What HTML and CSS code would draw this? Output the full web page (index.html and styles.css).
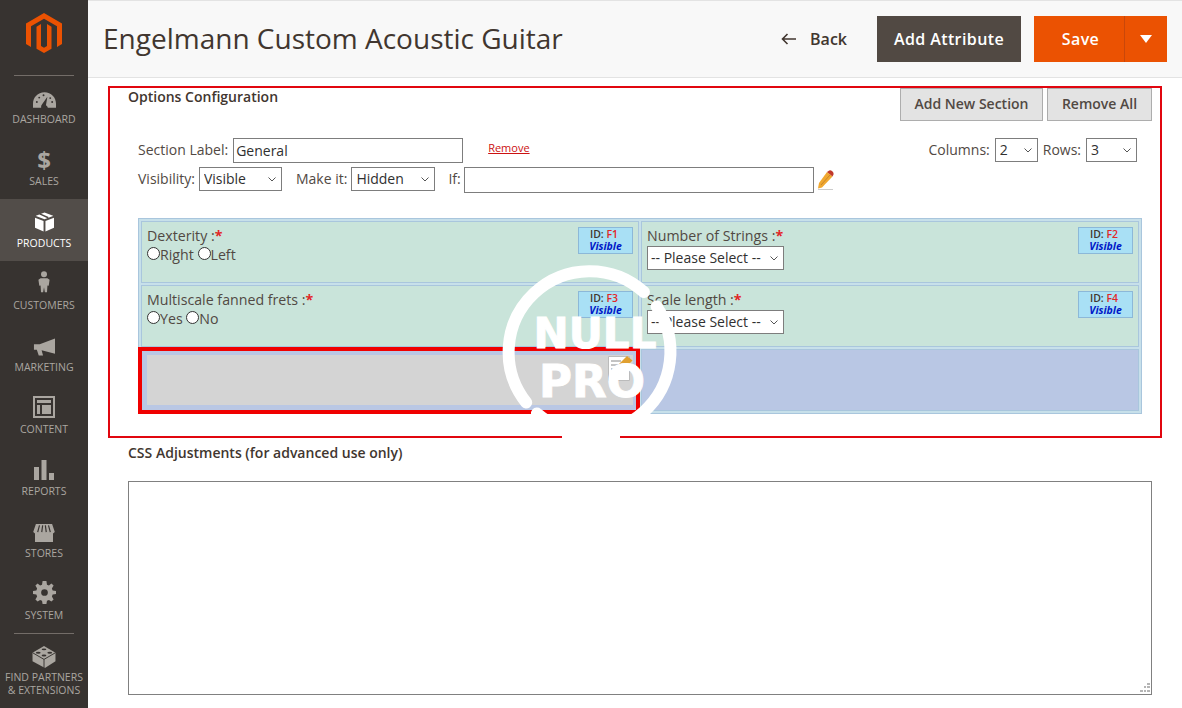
FILE: index.html
```html
<!DOCTYPE html>
<html lang="en">
<head>
<meta charset="utf-8">
<title>Engelmann Custom Acoustic Guitar</title>
<link rel="stylesheet" href="styles.css">
</head>
<body>
<div class="app">
  <nav class="side">
    <div class="logo">
      <svg width="36" height="40" viewBox="0 0 36 40"><path fill="#eb5202" d="M18 0L36 10.400V31l-5 3V13.300L18 5.800 5 13.300V34l-5-3V10.400z"/><path fill="#eb5202" d="M18 40l-7.500-4.300V13.700l4.500-2.600V33l3 1.700 3-1.700V11.100l4.500 2.600v22z"/></svg>
    </div>
    <div class="rule rule-t"></div>
    <a class="item">
      <svg class="ic" width="23" height="16" viewBox="0 0 24 16"><path fill="#aaa6a0" d="M12 0C5 0 0 5.500 0 12v4h8.500a4 4 0 0 1 1-3.500L15 4.500l-1.500 9a4 4 0 0 1 2 2.500H24v-4C24 5.500 19 0 12 0z"/><g fill="#373330"><circle cx="4" cy="10" r="1"/><circle cx="6.500" cy="5.500" r="1"/><circle cx="11" cy="3" r="1"/><circle cx="20" cy="10" r="1"/><circle cx="18" cy="6" r="1"/></g></svg>
      <span>DASHBOARD</span>
    </a>
    <a class="item">
      <span class="dollar">$</span>
      <span>SALES</span>
    </a>
    <a class="item on">
      <svg class="ic" width="19" height="20" viewBox="0 0 20 20"><path fill="#fff" d="M10 0l9 3.500v.1L10 7 1 3.600v-.1z M0 5.500l9 3.500v11L0 16z M20 5.500V16l-9 4V9z"/><path stroke="#4e4844" stroke-width="1.500" d="M5 1.500l9 4"/></svg>
      <span>PRODUCTS</span>
    </a>
    <a class="item">
      <svg class="ic" width="12" height="24" viewBox="0 0 14 25"><circle cx="7" cy="3.500" r="3.500" fill="#aaa6a0"/><path fill="#aaa6a0" d="M3 8h8l2.500 2-1 7-1.500-.5-.5 8H8l-1-6-1 6H3.500l-.5-8-1.500.5-1-7z"/></svg>
      <span>CUSTOMERS</span>
    </a>
    <a class="item">
      <svg class="ic" width="22" height="18" viewBox="0 0 23 18"><path fill="#aaa6a0" d="M23 0v16L9 12.500l1.500 5.500H6l-2-6H1V6h6z"/></svg>
      <span>MARKETING</span>
    </a>
    <a class="item">
      <svg class="ic" width="22" height="22" viewBox="0 0 22 22"><path fill="#aaa6a0" fill-rule="evenodd" d="M0 0h22v22H0zM2 2v18h18V2zM4 4h14v3H4zM4 9h3v9H4zM9 9h9v9H9z"/></svg>
      <span>CONTENT</span>
    </a>
    <a class="item">
      <svg class="ic" width="20" height="20" viewBox="0 0 20 20"><path fill="#aaa6a0" d="M0 7h5v13H0zM7.500 0h5v20h-5zM15 13h5v7h-5z"/></svg>
      <span>REPORTS</span>
    </a>
    <a class="item">
      <svg class="ic" width="24" height="18" viewBox="0 0 24 20"><path fill="#aaa6a0" d="M3 0h18l3 9-2 1.500V20H2V10.500L0 9z"/><path stroke="#373330" stroke-width="1.300" d="M7 1.500L5 9M10.500 1.500L9.500 9M13.500 1.500l1 7.500M17 1.500l2 7.500"/></svg>
      <span>STORES</span>
    </a>
    <a class="item">
      <svg class="ic" width="23" height="23" viewBox="-1 -1 24 24"><path fill="#aaa6a0" fill-rule="evenodd" d="M9 -1h4l.6 4 2 .8L18.200 1.500 20.500 3.800l-1.800 3 .8 2L23 9.500v3l-3.500.7-.8 2 1.800 3-2.300 2.300-2.600-1.800-2 .8L13 23H9l-.6-3.500-2-.8-2.600 1.800-2.300-2.300 1.800-3-.8-2L-1 12.500v-3l3.500-.7.800-2-1.800-3L3.800 1.500l2.600 2.300 2-.8zM11 7.500a3.500 3.500 0 1 0 0 7 3.500 3.500 0 0 0 0-7z"/></svg>
      <span>SYSTEM</span>
    </a>
    <div class="rule"></div>
    <a class="item last">
      <svg class="ic" width="24" height="22" viewBox="0 0 24 23"><path fill="#aaa6a0" d="M12 0l12 7v9l-11 7L0 16V7z"/><path stroke="#373330" fill="none" d="M0 7l12 7 12-7M12 14v9"/><g fill="#373330"><ellipse cx="12" cy="3.500" rx="2.500" ry="1"/><ellipse cx="6" cy="7" rx="2.500" ry="1"/><ellipse cx="18" cy="7" rx="2.500" ry="1"/><ellipse cx="12" cy="10" rx="2.500" ry="1"/></g></svg>
      <span>FIND PARTNERS<br>&amp; EXTENSIONS</span>
    </a>
  </nav>
  <main class="main">
    <header class="top">
      <h1>Engelmann Custom Acoustic Guitar</h1>
      <div class="actions">
        <a class="back"><svg width="15" height="12" viewBox="0 0 15 12"><path fill="none" stroke="#41362f" stroke-width="1.600" d="M6.500 1L1.500 6l5 5M1.500 6H15"/></svg><span>Back</span></a>
        <button class="btn-dark">Add Attribute</button>
        <div class="save"><button class="save-main">Save</button><button class="save-arrow" aria-label="More"><i></i></button></div>
      </div>
    </header>
    <div class="content">
      <section class="box">
        <div class="box-head">
          <h2>Options Configuration</h2>
          <div class="box-btns"><button class="gbtn">Add New Section</button><button class="gbtn">Remove All</button></div>
        </div>
        <div class="form">
          <div class="form-row r1">
            <label class="l-sec">Section Label:</label><input class="in in-label" value="General"><a class="remove">Remove</a>
            <div class="grid-size">
              <label>Columns:</label><select class="sel sel-c"><option>2</option></select>
              <label>Rows:</label><select class="sel sel-r"><option>3</option></select>
            </div>
          </div>
          <div class="form-row r2">
            <label>Visibility:</label><select class="sel sel-v"><option>Visible</option></select>
            <label class="ml">Make it:</label><select class="sel sel-h"><option>Hidden</option></select>
            <label class="ml2">If:</label><input class="in in-if">
            <svg class="pencil" width="17" height="20" viewBox="0 0 17 20"><path fill="#f0a830" d="M10 2l5.500 4.500L5 17.500l-4 1 1-5.500z"/><path fill="#c0392b" d="M11.500 1q1.500-1.500 3.500 0t1.500 3.500l-1 2L10 2z"/><path stroke="#c9862a" d="M4 15l9-10"/><path stroke="#ccc" d="M1 19.500h15"/></svg>
          </div>
        </div>
        <div class="tbl">
          <div class="cell"><div class="badge"><b>ID: <em>F1</em></b><i>Visible</i></div><div class="lbl">Dexterity :<span class="req">*</span></div><div class="radios"><span class="radio"></span>Right <span class="radio"></span>Left</div></div>
          <div class="cell"><div class="badge"><b>ID: <em>F2</em></b><i>Visible</i></div><div class="lbl">Number of Strings :<span class="req">*</span></div><select class="sel sel-p"><option>-- Please Select --</option></select></div>
          <div class="cell"><div class="badge"><b>ID: <em>F3</em></b><i>Visible</i></div><div class="lbl">Multiscale fanned frets :<span class="req">*</span></div><div class="radios"><span class="radio"></span>Yes <span class="radio"></span>No</div></div>
          <div class="cell"><div class="badge"><b>ID: <em>F4</em></b><i>Visible</i></div><div class="lbl">Scale length :<span class="req">*</span></div><select class="sel sel-p"><option>-- Please Select --</option></select></div>
          <div class="cell sel-cell"><div class="inner"></div><svg class="note" width="25" height="25" viewBox="0 0 25 25"><path fill="#fff" stroke="#bbb" d="M.5.500h21v24H.5z"/><path stroke="#888" d="M3 5h10M3 9h8M3 13h8M3 17h8"/><path fill="#e0a030" d="M19 0l5.500 4.500-9 9L10 9z"/></svg></div>
          <div class="cell blue"></div>
        </div>
      </section>
      <section class="css">
        <h2>CSS Adjustments (for advanced use only)</h2>
        <div class="ta-wrap">
          <textarea class="ta"></textarea>
          <svg class="grip" width="10" height="10" viewBox="0 0 10 10"><path fill="#b5b5b5" d="M7 0h3v2H7zM4 3h2v2H4zM7 3h3v2H7zM0 7h3v2H0zM4 7h2v2H4zM7 7h3v2H7z"/></svg>
        </div>
      </section>
    </div>
  </main>
</div>
<svg class="mark" width="200" height="200" viewBox="0 0 200 200">
  <path class="arc" d="M36.200 146.500A81 81 0 0 1 153.900 36"/>
  <path class="arc" d="M166.600 50.500A81 81 0 0 1 47 157.500"/>
  <path class="arc-thin" d="M72 181H130"/>
  <text class="m1" x="105" y="92" text-anchor="middle">NULL</text>
  <text class="m2" x="102" y="141" text-anchor="middle">PRO</text>
</svg>
</body>
</html>
```
FILE: styles.css
```css
* { box-sizing: border-box; }
html, body { margin: 0; height: 708px; overflow: hidden; background: #fff; }
body { font-family: "Open Sans", sans-serif; color: #41362f; position: relative; }
.app { display: flex; height: 708px; }

.side { width: 88px; flex: none; background: #373330; display: flex; flex-direction: column; align-items: center; }
.logo { height: 75px; padding-top: 13px; }
.logo svg { display: block; }
.rule { width: 60px; height: 1px; background: #736d68; flex: none; }
.rule-t { margin-bottom: -1px; }
.item { width: 88px; height: 62px; flex: none; display: flex; flex-direction: column; align-items: center; justify-content: flex-end; padding-bottom: 11px; gap: 4px; color: #aaa6a0; font-size: 10.500px; line-height: 14px; text-align: center; }
.item.on { background: #524d49; color: #fff; }
.item.last { height: auto; justify-content: flex-start; padding: 12px 0 0; line-height: 13px; gap: 3px; }
.ic { display: block; flex: none; }
.dollar { font-size: 24px; font-weight: 700; line-height: 20px; color: #aaa6a0; }

.main { flex: 1; min-width: 0; }
.top { height: 78px; background: #f8f8f8; border-top: 1px solid #e3e3e3; border-bottom: 1px solid #e3e3e3; display: flex; align-items: center; justify-content: space-between; padding: 0 15px; }
h1 { margin: 0; padding-bottom: 2px; font-size: 28px; font-weight: 400; color: #41362f; line-height: 38px; }
.actions { display: flex; align-items: center; }
.back { display: flex; align-items: center; gap: 14px; font-size: 16px; font-weight: 600; margin-right: 30px; color: #41362f; }
.btn-dark { width: 144px; height: 46px; border: 0; background: #514943; color: #fff; font: 600 16px "Open Sans", sans-serif; letter-spacing: .4px; margin-right: 13px; }
.save { display: flex; height: 46px; }
.save-main { width: 91px; border: 0; padding: 0 0 0 3px; background: #eb5202; color: #fff; font: 600 16px "Open Sans", sans-serif; letter-spacing: .4px; border-right: 1px solid #c9470a; }
.save-arrow { width: 42px; border: 0; background: #eb5202; display: flex; align-items: center; justify-content: center; padding: 0; }
.save-arrow i { width: 0; height: 0; border-left: 6px solid transparent; border-right: 6px solid transparent; border-top: 8px solid #fff; }

.content { padding: 8px 20px 0; }
.box { border: 2px solid #e1060f; height: 352px; padding: 0 8px 0 18px; margin-bottom: 6px; }
h2 { margin: 0; font-size: 14px; font-weight: 600; color: #41362f; line-height: 17px; }
.box-head { display: flex; justify-content: space-between; align-items: flex-start; }
.box-btns { display: flex; gap: 4px; }
.gbtn { height: 33px; min-width: 105px; padding: 0 13.500px 2px; background: #e3e3e3; border: 1px solid #adadad; color: #514943; font: 600 14px "Open Sans", sans-serif; }
.form { padding: 17px 15px 0 10px; font-size: 14px; color: #514943; }
.form-row { display: flex; align-items: flex-start; }
.r1 { height: 25px; }
.r2 { height: 26px; margin-top: 4px; }
label { margin-right: 4px; line-height: 24px; }
.l-sec { margin-right: 5px; }
.in { border: 1px solid #7d7d7d; height: 25px; padding: 0 2px; font: 14px "Open Sans", sans-serif; color: #303030; background: #fff; }
.in-label { width: 230px; }
.remove { font-size: 11px; line-height: 20px; color: #cc1111; text-decoration: underline; margin-left: 25px; }
.grid-size { margin-left: auto; display: flex; align-items: flex-start; }
.grid-size label { margin-right: 5px; }
.sel { appearance: none; height: 24px; border: 1px solid #7d7d7d; border-radius: 0; background: #fff url("data:image/svg+xml,%3Csvg xmlns='http://www.w3.org/2000/svg' width='8' height='5'%3E%3Cpath d='M.5.500l3.500 3.500 3.500-3.500' fill='none' stroke='%23555'/%3E%3C/svg%3E") no-repeat right 5px center; font: 14px "Open Sans", sans-serif; color: #303030; padding: 0 0 2px 4px; }
.sel-c { width: 43px; margin-right: 5px; }
.sel-r { width: 51px; }
.sel-v { width: 83px; }
.sel-h { width: 84px; }
.sel-p { width: 137px; display: block; padding-left: 3px; margin-top: 1px; }
.ml { margin-left: 14px; }
.ml2 { margin-left: 13px; }
.in-if { width: 350px; height: 26px; margin-left: -1px; }
.pencil { margin: 3px 0 0 3px; }

.tbl { margin: 25px 0 0 10px; display: grid; grid-template-columns: 498px 498px; grid-auto-rows: 62px; gap: 2px; background: #c7e0ea; border: 1px solid #a9c6dd; padding: 2px; width: 1004px; }
.cell { background: #c9e4da; border: 1px solid #a9c6dd; padding: 4px 5px 0 5px; position: relative; font-size: 14.200px; color: #514943; line-height: 19px; }
.lbl { height: 19px; }
.req { color: #e22626; font-weight: 700; }
.radios { display: flex; align-items: center; height: 19px; white-space: pre; }
.radio { width: 13px; height: 13px; border: 1px solid #333; border-radius: 50%; background: #fff; margin-bottom: 2px; display: inline-block; }
.badge { position: absolute; top: 5px; right: 5px; width: 55px; height: 27px; background: #a9e0f5; border: 1px solid #8cb8d8; font-size: 10.500px; line-height: 12px; text-align: center; }
.badge b { display: block; color: #41362f; font-weight: 600; padding-right: 3px; }
.badge em { color: #e22626; font-style: normal; }
.badge i { display: block; color: #0018c8; font-weight: 700; font-style: italic; }
.sel-cell { background: #b9c7e4; border: 4px solid #f00000; padding: 4px 3px 5px 5px; margin: -2px -1px -3px -3px; }
.inner { background: #d4d4d4; height: 100%; }
.note { position: absolute; top: 5px; right: 3px; }
.blue { background: #b9c7e4; }

.css h2 { margin-bottom: 20px; padding-left: 20px; }
.ta-wrap { position: relative; margin-left: 20px; width: 1024px; height: 214px; }
.ta { display: block; width: 100%; height: 100%; border: 1px solid #808080; background: #fff; resize: none; }
.grip { position: absolute; right: 2px; bottom: 2px; }

.mark { position: absolute; left: 490px; top: 256px; pointer-events: none; }
.arc { fill: none; stroke: #fff; stroke-width: 12; stroke-linecap: round; }
.arc-thin { fill: none; stroke: #fff; stroke-width: 5; }
.m1 { font: 700 42px "DejaVu Sans", sans-serif; fill: #fff; stroke: #fff; stroke-width: 1; }
.m2 { font: 700 45px "DejaVu Sans", sans-serif; fill: #fff; stroke: #fff; stroke-width: 1; }
```
